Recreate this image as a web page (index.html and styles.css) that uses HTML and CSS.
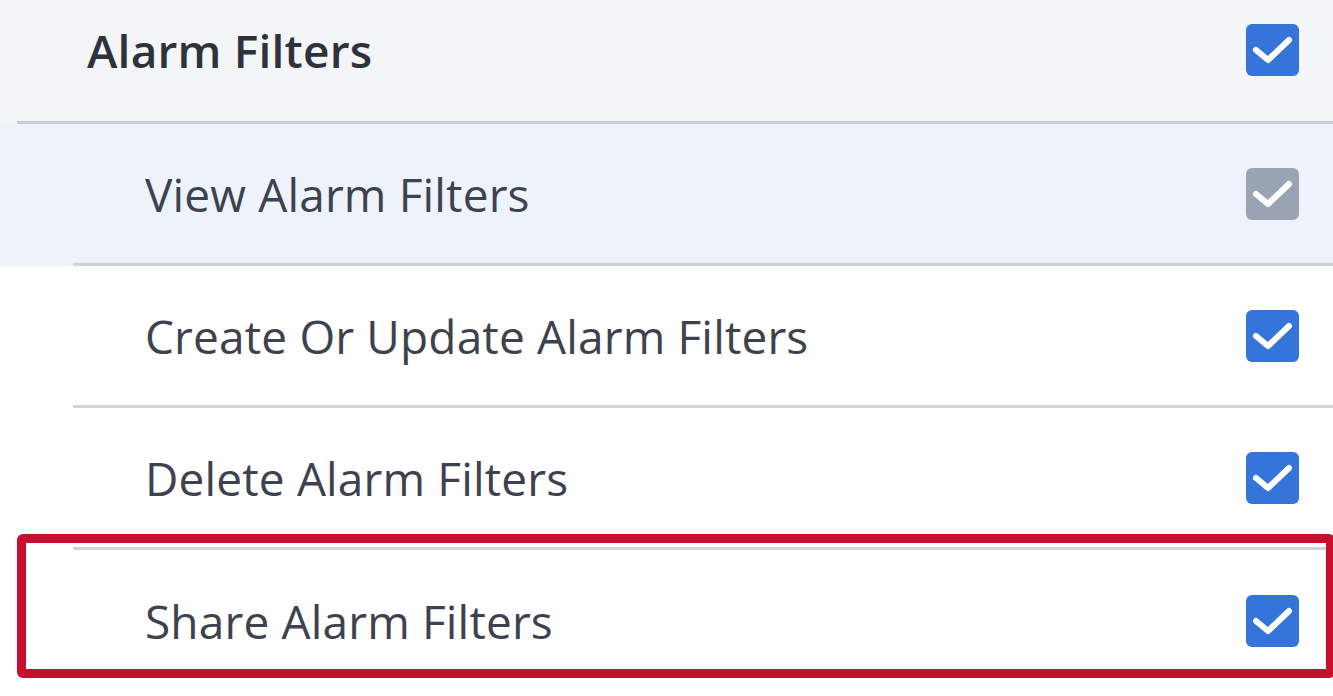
FILE: index.html
```html
<!DOCTYPE html>
<html lang="en">
<head>
<meta charset="utf-8">
<title>Alarm Filters</title>
<link rel="stylesheet" href="styles.css">
</head>
<body>
<div class="group">
  <div class="group-head">
    <div class="head-inner">
      <span class="head-title">Alarm Filters</span>
      <span class="check on"><svg viewBox="0 0 53 52"><path d="M10 26 L22 36 L43 16"/></svg></span>
    </div>
  </div>
  <div class="item selected">
    <div class="item-inner">
      <span class="item-label">View Alarm Filters</span>
      <span class="check disabled"><svg viewBox="0 0 53 52"><path d="M10 26 L22 36 L43 16"/></svg></span>
    </div>
  </div>
  <div class="item">
    <div class="item-inner">
      <span class="item-label">Create Or Update Alarm Filters</span>
      <span class="check on"><svg viewBox="0 0 53 52"><path d="M10 26 L22 36 L43 16"/></svg></span>
    </div>
  </div>
  <div class="item">
    <div class="item-inner">
      <span class="item-label">Delete Alarm Filters</span>
      <span class="check on"><svg viewBox="0 0 53 52"><path d="M10 26 L22 36 L43 16"/></svg></span>
    </div>
  </div>
  <div class="item highlighted">
    <div class="item-inner last">
      <span class="item-label">Share Alarm Filters</span>
      <span class="check on"><svg viewBox="0 0 53 52"><path d="M10 26 L22 36 L43 16"/></svg></span>
    </div>
  </div>
</div>
</body>
</html>
```
FILE: styles.css
```css
html, body {
  margin: 0;
  padding: 0;
  background: #ffffff;
  overflow: hidden;
}
body {
  font-family: "Open Sans", "Noto Sans", sans-serif;
  width: 1333px;
  height: 696px;
}
.group {
  display: flex;
  flex-direction: column;
}
.group-head {
  background: #f4f5f7;
  padding-left: 17px;
}
.head-inner {
  height: 100px;
  padding-bottom: 21px;
  border-bottom: 3px solid #c9cdd4;
  display: flex;
  align-items: center;
  justify-content: space-between;
  padding-left: 70px;
  padding-right: 34px;
}
.head-title {
  font-size: 46px;
  font-weight: 600;
  color: #2e323d;
  letter-spacing: 0.2px;
}
.item {
  padding-left: 73px;
  background: #ffffff;
}
.item.selected {
  background: #edf2fb;
}
.item-inner {
  height: 139px;
  border-bottom: 3px solid #cfd3da;
  display: flex;
  align-items: center;
  justify-content: space-between;
  padding-left: 72px;
  padding-right: 34px;
}
.item-inner.last {
  border-bottom: none;
  height: 142px;
}
.item-label {
  font-size: 46px;
  letter-spacing: 0.15px;
  color: #3d424e;
}
.check {
  width: 53px;
  height: 52px;
  border-radius: 6px;
  display: flex;
  flex: none;
}
.check svg {
  width: 53px;
  height: 52px;
}
.check path {
  fill: none;
  stroke: #ffffff;
  stroke-width: 6;
  stroke-linecap: round;
  stroke-linejoin: round;
}
.check.on {
  background: #3574d9;
}
.check.disabled {
  background: #9aa3b2;
}
.item.highlighted {
  position: relative;
}
.item.highlighted::after {
  content: "";
  position: absolute;
  left: 17px;
  top: -16px;
  width: 1318px;
  height: 144px;
  border: 9px solid #c8102e;
  border-radius: 6px;
  box-sizing: border-box;
  pointer-events: none;
}
```
